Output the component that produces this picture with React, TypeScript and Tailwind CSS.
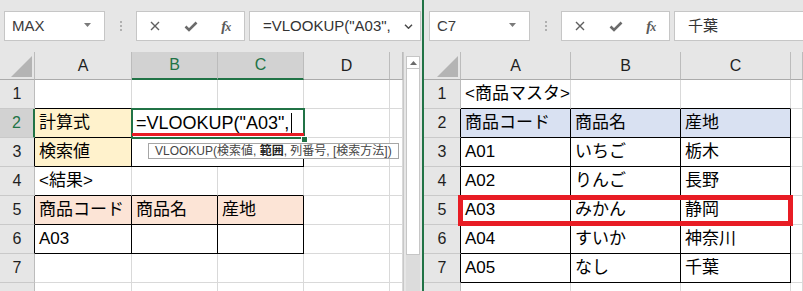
import React from 'react';

const SANS = "font-['Liberation_Sans','Noto_Sans_CJK_JP',sans-serif]";

type Edge = 'g' | 'k';

const Cell: React.FC<{
  children?: React.ReactNode;
  bg?: string;
  r?: Edge;
  b?: Edge;
  span?: boolean;
  className?: string;
}> = ({ children, bg = '', r = 'g', b = 'g', span, className = '' }) => (
  <div
    className={`flex items-center whitespace-nowrap pl-[4px] border-r border-b ${
      r === 'k' ? 'border-r-black' : 'border-r-[#d9d9d9]'
    } ${b === 'k' ? 'border-b-black' : 'border-b-[#d9d9d9]'} ${span ? 'col-span-2' : ''} ${bg} ${className}`}
  >
    {children}
  </div>
);

// row 8 is only a sliver at the bottom edge, so its number is left out
const RowHead: React.FC<{ n?: number; mode?: 'g' | 'k' | 'sel' }> = ({ n, mode = 'g' }) => {
  const cls =
    mode === 'sel'
      ? 'bg-[#d2d2d2] text-[#217346] border-r-2 border-r-[#217346]'
      : mode === 'k'
      ? 'bg-[#e6e6e6] text-[#1f1f1f] border-r border-r-black'
      : 'bg-[#e6e6e6] text-[#1f1f1f] border-r border-r-[#bcbcbc]';
  return (
    <div className={`flex items-center justify-center border-b border-b-[#c9c9c9] text-[16px] ${cls}`}>{n}</div>
  );
};

const ColHead: React.FC<{ label?: string; sel?: boolean }> = ({ label, sel }) => (
  <div
    className={`flex items-center justify-center border-r border-r-[#bcbcbc] text-[16px] ${
      sel
        ? 'bg-[#d2d2d2] text-[#217346] border-b-2 border-b-[#217346]'
        : 'bg-[#e6e6e6] text-[#1f1f1f] border-b border-b-[#ababab]'
    }`}
  >
    {label}
  </div>
);

const Corner = () => (
  <div className="flex items-end justify-end pr-[2px] pb-[2px] bg-[#e6e6e6] border-r border-r-[#bcbcbc] border-b border-b-[#ababab]">
    <svg width="21" height="21" viewBox="0 0 21 21">
      <path d="M21 0V21H0Z" fill="#b4b4b4" />
    </svg>
  </div>
);

const FormulaBar: React.FC<{ name: string; formula: string; chevron?: boolean; pad: string }> = ({
  name,
  formula,
  chevron,
  pad,
}) => (
  <div className={`h-[52px] shrink-0 flex pt-[11px] ${pad}`}>
    <div className="relative w-[101px] h-[30px] shrink-0 bg-white border border-[#c6c6c6] flex items-center pl-[7px] text-[15px] text-[#3b3b3b]">
      {name}
      <svg className="absolute right-[13px] top-[11px]" width="7" height="4" viewBox="0 0 7 4">
        <path d="M0 0H7L3.5 4Z" fill="#7a7a7a" />
      </svg>
    </div>
    <div className="w-[31px] h-[30px] shrink-0 flex flex-col items-center justify-center gap-[2px]">
      <span className="w-[2px] h-[2px] bg-[#b0b0b0]" />
      <span className="w-[2px] h-[2px] bg-[#b0b0b0]" />
      <span className="w-[2px] h-[2px] bg-[#b0b0b0]" />
    </div>
    <div className="w-[109px] h-[30px] shrink-0 bg-white border border-[#c6c6c6] flex items-center">
      <div className="w-[36px] flex justify-center">
        <svg width="10" height="10" viewBox="0 0 10 10">
          <path d="M1 1L9 9M9 1L1 9" stroke="#5f5f5f" strokeWidth="1.4" />
        </svg>
      </div>
      <div className="w-[36px] flex justify-center">
        <svg width="14" height="11" viewBox="0 0 14 11">
          <path d="M1.5 5.5L5 9L12.5 1.5" stroke="#6b6b6b" strokeWidth="2.6" fill="none" />
        </svg>
      </div>
      <div className="w-[36px] flex justify-center items-baseline font-['Liberation_Serif',serif] italic font-bold text-[15px] text-[#5a5a5a] leading-none">
        f<span className="text-[12px] -ml-[1px]">x</span>
      </div>
    </div>
    <div
      className={`ml-[4px] h-[30px] bg-white border border-[#c6c6c6] flex items-center pl-[13px] text-[15px] text-[#333] whitespace-nowrap ${
        chevron ? 'flex-1 mr-[1px] relative' : 'w-[220px] shrink-0'
      }`}
    >
      {formula}
      {chevron && (
        <svg className="absolute right-[7px] top-[12px]" width="9" height="5" viewBox="0 0 9 5">
          <path d="M1 0.8L4.5 4.2L8 0.8" stroke="#4a4a4a" strokeWidth="1.5" fill="none" />
        </svg>
      )}
    </div>
  </div>
);

const LeftSheet = () => (
  <div className="relative w-[403px] shrink-0 grid grid-cols-[35px_97px_86px_86px_86px_1fr] grid-rows-[28px_repeat(8,29px)] bg-white text-[17px] leading-[20px] text-black">
    <Corner />
    <ColHead label="A" />
    <ColHead label="B" sel />
    <ColHead label="C" sel />
    <ColHead label="D" />
    <ColHead />

    <RowHead n={1} />
    <Cell b="k" />
    <Cell b="k" />
    <Cell b="k" />
    <Cell />
    <Cell />

    <RowHead n={2} mode="sel" />
    <Cell bg="bg-[#fff2cc]" r="k" b="k">計算式</Cell>
    <Cell span r="k" b="k" className="text-[18px]">
      =VLOOKUP("A03",<span className="ml-[2px] w-[1px] h-[21px] bg-black" />
    </Cell>
    <Cell />
    <Cell />

    <RowHead n={3} mode="k" />
    <Cell bg="bg-[#fff2cc]" r="k" b="k">検索値</Cell>
    <Cell span r="k" b="k" />
    <Cell />
    <Cell />

    <RowHead n={4} />
    <Cell b="k">&lt;結果&gt;</Cell>
    <Cell b="k" />
    <Cell b="k" />
    <Cell />
    <Cell />

    <RowHead n={5} mode="k" />
    <Cell bg="bg-[#fce4d6]" r="k" b="k">商品コード</Cell>
    <Cell bg="bg-[#fce4d6]" r="k" b="k">商品名</Cell>
    <Cell bg="bg-[#fce4d6]" r="k" b="k">産地</Cell>
    <Cell />
    <Cell />

    <RowHead n={6} mode="k" />
    <Cell r="k" b="k">A03</Cell>
    <Cell r="k" b="k" />
    <Cell r="k" b="k" />
    <Cell />
    <Cell />

    <RowHead n={7} />
    <Cell />
    <Cell />
    <Cell />
    <Cell />
    <Cell />

    <RowHead />
    <Cell />
    <Cell />
    <Cell />
    <Cell />
    <Cell />

    {/* selection of B2:C2 */}
    <div className="absolute left-[131px] top-[56px] w-[174px] h-[31px] border-2 border-[#217346]" />
    <div className="absolute left-[132px] top-[81px] w-[172px] h-[3px] bg-[#e81c24]" />
    <div className="absolute left-[301px] top-[84px] w-[7px] h-[7px] bg-[#217346] border border-white" />
    <div className="absolute left-[148px] top-[91px] h-[16px] pl-[6px] pr-[6px] bg-white border border-[#a6a6a6] text-[12px] leading-[14px] text-[#444] whitespace-nowrap">
      VLOOKUP(検索値, <span className="font-semibold text-[#222]">範囲</span>, 列番号, [検索方法])
    </div>
  </div>
);

const ScrollStrip = () => (
  <div className="w-[19px] shrink-0 bg-[#e6e6e6] border-l border-[#c8c8c8] flex flex-col pl-[2px]">
    <div className="mt-[4px] w-[14px] h-[199px] bg-white border border-[#c6c6c6]">
      <div className="h-[12px] border-b border-[#c6c6c6] flex items-center justify-center">
        <svg width="7" height="4" viewBox="0 0 7 4">
          <path d="M0 4L3.5 0L7 4Z" fill="#6b6b6b" />
        </svg>
      </div>
    </div>
    <div className="w-[14px] flex-1 bg-[#dcdcdc]" />
  </div>
);

const master = [
  ['A01', 'いちご', '栃木'],
  ['A02', 'りんご', '長野'],
  ['A03', 'みかん', '静岡'],
  ['A04', 'すいか', '神奈川'],
  ['A05', 'なし', '千葉'],
];

const RightSheet = () => (
  <div className="relative grid grid-cols-[37px_110px_110px_110px_1fr] grid-rows-[28px_repeat(8,29px)] bg-white text-[17px] leading-[20px] text-black">
    <Corner />
    <ColHead label="A" />
    <ColHead label="B" />
    <ColHead label="C" />
    <ColHead />

    <RowHead n={1} />
    <Cell b="k">&lt;商品マスタ&gt;</Cell>
    <Cell b="k" />
    <Cell b="k" />
    <Cell />

    <RowHead n={2} mode="k" />
    <Cell bg="bg-[#d9e1f2]" r="k" b="k">商品コード</Cell>
    <Cell bg="bg-[#d9e1f2]" r="k" b="k">商品名</Cell>
    <Cell bg="bg-[#d9e1f2]" r="k" b="k">産地</Cell>
    <Cell />

    {master.map((row, i) => (
      <React.Fragment key={row[0]}>
        <RowHead n={i + 3} mode="k" />
        <Cell r="k" b="k">{row[0]}</Cell>
        <Cell r="k" b="k">{row[1]}</Cell>
        <Cell r="k" b="k">{row[2]}</Cell>
        <Cell />
      </React.Fragment>
    ))}

    <RowHead />
    <Cell />
    <Cell />
    <Cell />
    <Cell />

    {/* highlight of the matching row */}
    <div className="absolute left-[34px] top-[143px] w-[335px] h-[31px] border-[5px] border-[#e81c24]" />
  </div>
);

export default function App() {
  return (
    <div className={`w-[803px] h-[291px] overflow-hidden flex bg-[#e6e6e6] ${SANS}`}>
      <div className="w-[422px] shrink-0 flex flex-col">
        <FormulaBar name="MAX" formula={'=VLOOKUP("A03",'} chevron pad="pl-[4px]" />
        <div className="flex flex-1 min-h-0">
          <LeftSheet />
          <ScrollStrip />
        </div>
      </div>
      <div className="w-[2px] shrink-0 bg-[#217346]" />
      <div className="flex-1 min-w-0 flex flex-col overflow-hidden">
        <FormulaBar name="C7" formula="千葉" pad="pl-[5px]" />
        <RightSheet />
      </div>
    </div>
  );
}
